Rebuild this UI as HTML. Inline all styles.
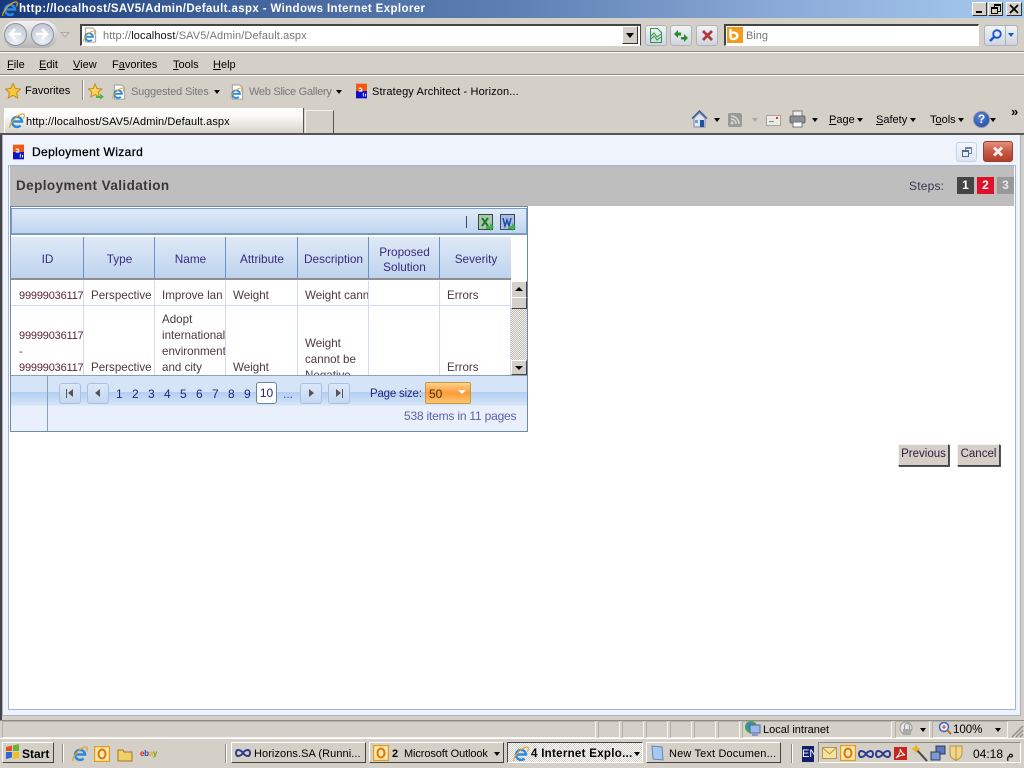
<!DOCTYPE html>
<html><head><meta charset="utf-8"><title>Deployment Wizard</title>
<style>
html,body{margin:0;padding:0}
body{width:1024px;height:768px;overflow:hidden;position:relative;background:#d4d0c8;font:11px "Liberation Sans",sans-serif;color:#000}
div,span,svg{position:absolute}
.t{white-space:nowrap;line-height:14px}
u{text-decoration:underline}
.g{color:#777}
.arr{width:0;height:0;border:3px solid transparent;border-top:4px solid #000;border-bottom:0}
.tb{width:20px;height:19px;border:1px solid #aeb2bb;border-radius:3px;background:linear-gradient(#f1f3f7,#cfd5e2)}
.hd{top:237px;height:41px;background:linear-gradient(#dfe9f6,#bed4ee);border-right:1px solid #6b92c4;box-sizing:border-box}
.ht{left:1px;right:0;text-align:center;color:#3a2a80;font-size:11.8px;line-height:15px}
.col{top:0;height:94px;overflow:hidden;border-right:1px solid #cfdbea;box-sizing:border-box}
.c{left:7px;white-space:nowrap;font-size:11.6px;line-height:16px;color:#4a3a40}
.pb{top:383px;width:20px;height:19px;border:1px solid #a9c0de;border-radius:3px;background:linear-gradient(#dce8f8,#c3d8f2)}
.pn{top:387px;font-size:12px;line-height:14px;color:#25257a}
.btn{top:444px;height:20px;background:#d4d0c8;border:1px solid;border-color:#f4f3ef #444 #444 #f4f3ef;box-shadow:1px 1px 0 #555;color:#302040;font-size:11.5px;line-height:19px;text-align:center}
.task{top:742px;height:21px;background:#d4d0c8;border:1px solid;border-color:#fff #444 #444 #fff;box-sizing:border-box}
.sb{top:721px;height:17px;border-left:1px solid #b4b0a8;border-right:1px solid #f4f3ef;border-top:1px solid #b4b0a8;border-bottom:1px solid #f4f3ef;box-sizing:border-box}
</style></head><body>
<svg width="0" height="0" style="left:0;top:0"><defs>
<symbol id="ie" viewBox="0 0 16 16"><path d="M3.500 8.500h9.500A5 5 0 1 0 11.500 12.500" fill="none" stroke="#2b8ae0" stroke-width="2.500"/><path d="M1 15C-.5 12 7 2.500 13 1c2.500-.5 3 1.500 1.500 4.500" fill="none" stroke="#e3a32c" stroke-width="1.200"/></symbol>
<symbol id="pg" viewBox="0 0 16 16"><path d="M2.500.5h8l3 3v12h-11z" fill="#fff" stroke="#9a9a9a"/><use href="#ie" x="0" y="3" width="13" height="13"/></symbol>
<symbol id="sa" viewBox="0 0 12 16"><rect width="12" height="8" fill="#f25a10"/><rect y="8" width="12" height="8" fill="#1010c8"/><path d="M3 5h3M6 5v3M3 8h4" stroke="#fff" stroke-width="1.300"/><path d="M8 10v4M10.500 11v3" stroke="#fff"/></symbol>
<symbol id="oi" viewBox="0 0 16 16"><rect x=".5" y=".5" width="15" height="15" fill="#fbe9b0" stroke="#e59a18" stroke-width="1.400"/><ellipse cx="8" cy="8" rx="3.500" ry="4.500" fill="none" stroke="#d9770b" stroke-width="2"/></symbol>
<symbol id="inf" viewBox="0 0 16 8"><path d="M8 4C6 1 4 1 3 1 1.500 1 1 3 1 4s.5 3 2 3c1 0 3 0 5-3 2-3 4-3 5-3 1.500 0 2 2 2 3s-.5 3-2 3c-1 0-3 0-5-3z" fill="none" stroke="#2d3c8e" stroke-width="2"/></symbol>
</defs></svg>

<!-- title bar -->
<div style="left:0;top:0;width:1024px;height:18px;background:linear-gradient(90deg,#17387a 0,#3e6099 20%,#5d7fb2 50%,#88a9d6 75%,#a6caf0 100%)"></div>
<svg style="left:2px;top:1px" width="16" height="16"><use href="#ie"/></svg>
<div class="t" style="left:19px;top:2px;color:#fff;font-weight:700;font-size:11.5px;letter-spacing:.37px">http://localhost/SAV5/Admin/Default.aspx - Windows Internet Explorer</div>
<div style="left:972px;top:2px;background:#d4d0c8;border:1px solid;border-color:#fff #333 #333 #fff;width:13px;height:12px"><span style="left:3px;top:8px;width:6px;height:2px;background:#000"></span></div>
<div style="left:988px;top:2px;width:13px;height:12px;background:#d4d0c8;border:1px solid;border-color:#fff #333 #333 #fff"><span style="left:5px;top:1px;width:5px;height:5px;border:1px solid #000;border-top-width:2px"></span><span style="left:2px;top:4px;width:5px;height:4px;border:1px solid #000;border-top-width:2px;background:#d4d0c8"></span></div>
<div style="left:1006px;top:2px;width:14px;height:12px;background:#d4d0c8;border:1px solid;border-color:#fff #333 #333 #fff"><svg style="left:2px;top:1px" width="10" height="10"><path d="M1 1l8 8M9 1L1 9" stroke="#000" stroke-width="1.800"/></svg></div>

<!-- nav -->
<div style="left:2px;top:21px;width:56px;height:27px;border-radius:14px;background:linear-gradient(#f3f3f3,#b5b5b5)"></div>
<div style="left:4px;top:23px;width:21px;height:21px;border-radius:50%;background:radial-gradient(circle at 50% 80%,#eef2f8,#b9c1ce);border:1px solid #8d929c"></div>
<div style="left:31px;top:23px;width:21px;height:21px;border-radius:50%;background:radial-gradient(circle at 50% 80%,#eef2f8,#b9c1ce);border:1px solid #8d929c"></div>
<svg style="left:7px;top:27px" width="16" height="14"><path d="M14 7H3M8 2L3 7l5 5" fill="none" stroke="#fff" stroke-width="2.600"/></svg>
<svg style="left:35px;top:27px" width="16" height="14"><path d="M1 7h11M7 2l5 5-5 5" fill="none" stroke="#fff" stroke-width="2.600"/></svg>
<svg style="left:60px;top:32px" width="10" height="6"><path d="M1 .5h8L5 5z" fill="#d8d6d0" stroke="#aaa"/></svg>

<div style="left:80px;top:24px;width:558px;height:19px;background:#fff;border-style:solid;border-width:2px 1px 1px 2px;border-color:#444 #444 #fff #444"></div>
<svg style="left:83px;top:27px" width="15" height="16"><use href="#pg"/></svg>
<div class="t" style="left:103px;top:29px;color:#777;font-size:11px;letter-spacing:.1px">http://<span style="position:static;color:#111">localhost</span>/SAV5/Admin/Default.aspx</div>
<div style="left:622px;top:26px;width:14px;height:16px;background:#d4d0c8;border:1px solid;border-color:#fff #333 #333 #fff"><span class="arr" style="left:3px;top:6px;border-width:5px 4px 0;border-top-color:#000"></span></div>

<div class="tb" style="left:645px;top:25px"><svg style="left:4px;top:2px" width="12" height="15"><path d="M.5.5h7l4 4v10H.5zM1 8l3-3 3 4 4-3M1 11l3-3 3 4 4-3" fill="none" stroke="#2f9a44"/></svg></div>
<div class="tb" style="left:670px;top:25px"><svg style="left:2px;top:3px" width="16" height="14"><path d="M1 5l4-4v2.500h3V6.500H5V9z" fill="#2b8a2b"/><path d="M15 8l-4 4v-2.500H8V7h3V4z" fill="#2b8a2b" transform="translate(0 1)"/></svg></div>
<div class="tb" style="left:696px;top:25px"><svg style="left:4px;top:3px" width="13" height="13"><path d="M2 2l9 9M11 2l-9 9" stroke="#b03a3a" stroke-width="2.800"/></svg></div>

<div style="left:724px;top:24px;width:252px;height:19px;background:#fff;border-style:solid;border-width:2px 1px 1px 2px;border-color:#444 #fff #fff #444"></div>
<div style="left:727px;top:27px;width:16px;height:16px;background:#f39c1c"><svg style="left:1px;top:1px" width="14" height="14"><path d="M2.500 1v9M2.500 10a4 3.200 0 1 0 1-5" fill="none" stroke="#fff" stroke-width="2.400"/></svg></div>
<div class="t g" style="left:746px;top:29px;font-size:11px">Bing</div>
<div class="tb" style="left:984px;top:25px;border-radius:3px 0 0 3px"><svg style="left:3px;top:2px" width="15" height="15"><circle cx="9" cy="6" r="3.800" fill="#dbe7fb" stroke="#1a55d0" stroke-width="1.800"/><path d="M6 9l-4 4" stroke="#1a55d0" stroke-width="2.400"/></svg></div>
<div class="tb" style="left:1005px;top:25px;width:11px;border-radius:0 3px 3px 0"><span class="arr" style="left:2px;top:7px;border-top-color:#1a55d0"></span></div>

<div style="left:0;top:51px;width:1024px;height:1px;background:#8e8b84"></div>
<div style="left:0;top:52px;width:1024px;height:1px;background:#fff"></div>

<!-- menu -->
<div class="t" style="left:7px;top:58px"><u>F</u>ile</div>
<div class="t" style="left:39px;top:58px"><u>E</u>dit</div>
<div class="t" style="left:73px;top:58px"><u>V</u>iew</div>
<div class="t" style="left:112px;top:58px">F<u>a</u>vorites</div>
<div class="t" style="left:173px;top:58px"><u>T</u>ools</div>
<div class="t" style="left:213px;top:58px"><u>H</u>elp</div>
<div style="left:0;top:74px;width:1024px;height:1px;background:#8e8b84"></div>
<div style="left:0;top:75px;width:1024px;height:1px;background:#fff"></div>

<!-- favorites -->
<svg style="left:5px;top:83px" width="16" height="16"><path d="M8 .5l2.300 5 5.200.6-3.900 3.500 1.100 5.400L8 12.300 3.300 15l1.100-5.400L.5 6.100l5.200-.6z" fill="#f7c93e" stroke="#c98a1c"/></svg>
<div class="t" style="left:25px;top:84px">Favorites</div>
<div style="left:82px;top:80px;width:1px;height:20px;background:#8e8b84"></div>
<div style="left:83px;top:80px;width:1px;height:20px;background:#fff"></div>
<svg style="left:88px;top:83px" width="17" height="17"><path d="M7 1l2 4.500 4.800.5-3.500 3.200 1 4.800L7 11.500 2.800 14l1-4.800L.5 6l4.700-.5z" fill="#f7d55c" stroke="#c98a1c"/><path d="M8 13h4v-2.500l4 3.500-4 2.500V15H8z" fill="#4fb848"/></svg>
<svg style="left:112px;top:84px" width="15" height="16"><use href="#pg"/></svg>
<div class="t g" style="left:131px;top:85px;letter-spacing:-.17px">Suggested Sites</div>
<span class="arr" style="left:214px;top:90px"></span>
<svg style="left:230px;top:84px" width="15" height="16"><use href="#pg"/></svg>
<div class="t g" style="left:249px;top:85px;letter-spacing:-.27px">Web Slice Gallery</div>
<span class="arr" style="left:336px;top:90px"></span>
<svg style="left:356px;top:83px" width="11" height="16"><use href="#sa"/></svg>
<div class="t" style="left:372px;top:85px;letter-spacing:.12px">Strategy Architect - Horizon...</div>

<!-- tabs -->
<div style="left:4px;top:108px;width:298px;height:25px;background:linear-gradient(#fbfbfa,#fbfbfa 30%,#d6d3cc);border-right:1px solid #555;border-left:1px solid #fff"></div>
<svg style="left:9px;top:113px" width="16" height="16"><use href="#ie"/></svg>
<div class="t" style="left:26px;top:115px;letter-spacing:.1px">http://localhost/SAV5/Admin/Default.aspx</div>
<div style="left:305px;top:110px;width:27px;height:23px;border:1px solid #f2f1ec;border-bottom:0;border-right:1px solid #555"></div>

<svg style="left:691px;top:110px" width="17" height="18"><path d="M1 8.500L8.500 1 16 8.500" fill="none" stroke="#3c5aa8" stroke-width="1.500"/><path d="M3 8v9h11V8L8.500 3z" fill="#dfe6f3" stroke="#7f8aa0"/><rect x="9" y="10" width="4" height="7" fill="#2450a8"/><rect x="4" y="10" width="3" height="3" fill="#6fa0e0"/></svg>
<span class="arr" style="left:714px;top:118px"></span>
<div style="left:728px;top:113px;width:14px;height:14px;background:#9a9a96;border-radius:2px"><svg style="left:2px;top:2px" width="10" height="10"><circle cx="2" cy="8" r="1.500" fill="#d8d8d4"/><path d="M1 4a5 5 0 0 1 5 5M1 1a8 8 0 0 1 8 8" fill="none" stroke="#d8d8d4" stroke-width="1.500"/></svg></div>
<span class="arr" style="left:752px;top:118px;border-top-color:#aaa"></span>
<div style="left:766px;top:115px;width:13px;height:9px;background:#eceae6;border:1px solid #a8a59f"><span style="left:2px;top:5px;width:5px;height:1px;background:#888"></span><span style="left:9px;top:1px;width:2px;height:2px;background:#d33"></span></div>
<svg style="left:789px;top:110px" width="17" height="18"><rect x="4" y="1" width="9" height="6" fill="#eee" stroke="#777"/><rect x="1" y="6" width="15" height="7" rx="1.500" fill="#8b8f96" stroke="#666"/><rect x="4" y="12" width="9" height="5" fill="#fff" stroke="#777"/></svg>
<span class="arr" style="left:812px;top:118px"></span>
<div class="t" style="left:829px;top:113px"><u>P</u>age</div><span class="arr" style="left:857px;top:118px"></span>
<div class="t" style="left:876px;top:113px"><u>S</u>afety</div><span class="arr" style="left:910px;top:118px"></span>
<div class="t" style="left:930px;top:113px">T<u>o</u>ols</div><span class="arr" style="left:958px;top:118px"></span>
<div style="left:973px;top:111px;width:15px;height:15px;border-radius:50%;background:radial-gradient(circle at 40% 35%,#5d86d8,#1c3e9a);border:1px solid #8f97ad;color:#fff;font:700 12px/15px 'Liberation Sans',sans-serif;text-align:center">?</div>
<span class="arr" style="left:990px;top:118px"></span>
<div class="t" style="left:1011px;top:105px;font-size:13px;font-weight:700">»</div>

<div style="left:0;top:133px;width:1024px;height:2px;background:#555"></div>

<!-- page frame -->
<div style="left:0;top:135px;width:1024px;height:585px;background:#d4d0c8"></div>
<div style="left:0;top:135px;width:2px;height:585px;background:#444"></div>
<div style="left:2px;top:135px;width:1019px;height:581px;background:#eff3fc;border:1px solid #a8b3cc;border-top:0;box-sizing:border-box"></div>
<svg style="left:13px;top:144px" width="11" height="16"><use href="#sa"/></svg>
<div class="t" style="left:32px;top:145px;font-size:12px;-webkit-text-stroke:.3px #000;letter-spacing:.38px">Deployment Wizard</div>
<div style="left:956px;top:142px;width:19px;height:18px;border:1px solid #c5d3e4;border-radius:3px;background:linear-gradient(#f3f7fc,#dce6f3)"><span style="left:8px;top:4px;width:5px;height:4px;border:2px solid #6b85a8;border-width:2px 1px 1px"></span><span style="left:5px;top:7px;width:5px;height:4px;border:2px solid #50698c;border-width:2px 1px 1px;background:#e6eef8"></span></div>
<div style="left:983px;top:141px;width:28px;height:19px;border:1px solid #9a4030;border-radius:3px;background:linear-gradient(#e5907c,#c65a45 50%,#b03e2a)"><svg style="left:8px;top:4px" width="12" height="11"><path d="M2 1.500l8 8M10 1.500l-8 8" stroke="#f4ecea" stroke-width="3"/></svg></div>

<div style="left:8px;top:165px;width:1008px;height:545px;background:#fff;border:1px solid #a8b3cc;box-sizing:border-box"></div>
<div style="left:10px;top:166px;width:1004px;height:40px;background:#bebebe"></div>
<div class="t" style="left:16px;top:179px;font-size:13.5px;font-weight:700;color:#3d3538;letter-spacing:.42px">Deployment Validation</div>
<div class="t" style="left:909px;top:179px;font-size:12px;color:#3c3550;letter-spacing:.2px">Steps:</div>
<div style="left:957px;top:177px;width:17px;height:17px;background:#454545;color:#fff;font:700 12px/17px 'Liberation Sans',sans-serif;text-align:center">1</div>
<div style="left:977px;top:177px;width:17px;height:17px;background:#e0102a;color:#fff;font:700 12px/17px 'Liberation Sans',sans-serif;text-align:center">2</div>
<div style="left:997px;top:177px;width:17px;height:17px;background:#999;color:#e8e8e8;font:700 12px/17px 'Liberation Sans',sans-serif;text-align:center">3</div>

<!-- grid -->
<div style="left:10px;top:206px;width:518px;height:226px;background:#fff;border:1px solid #6d8cad;box-sizing:border-box"></div>
<div style="left:11px;top:208px;width:516px;height:27px;background:linear-gradient(#e1ebf8,#bfd5ef);border:1px solid #7c9cc4;border-bottom:2px solid #7d9bc0;box-sizing:border-box"></div>
<div style="left:466px;top:216px;width:1px;height:12px;background:#4a4070"></div>
<div style="left:478px;top:214px;width:13px;height:14px;background:#a8c8a8;border:1px solid #3a4a40"><svg style="left:0;top:0" width="16" height="16"><path d="M3 3l6 8M9 3l-6 8" stroke="#1c7a30" stroke-width="2"/><path d="M7 11h4V8l4 4-4 4v-2H7z" fill="#3fb04a"/></svg></div>
<div style="left:500px;top:214px;width:13px;height:14px;background:#a9bde0;border:1px solid #3a4a60"><svg style="left:0;top:0" width="16" height="16"><path d="M2 3l2 8 2-6 2 6 2-8" fill="none" stroke="#2248a8" stroke-width="1.500"/><path d="M7 11h4V8l4 4-4 4v-2H7z" fill="#3fb04a"/></svg></div>

<div class="hd" style="left:11px;width:73px"><div class="ht" style="top:15px">ID</div></div>
<div class="hd" style="left:84px;width:71px"><div class="ht" style="top:15px">Type</div></div>
<div class="hd" style="left:155px;width:71px"><div class="ht" style="top:15px">Name</div></div>
<div class="hd" style="left:226px;width:72px"><div class="ht" style="top:15px">Attribute</div></div>
<div class="hd" style="left:298px;width:71px"><div class="ht" style="top:15px">Description</div></div>
<div class="hd" style="left:369px;width:71px"><div class="ht" style="top:8px">Proposed<br>Solution</div></div>
<div class="hd" style="left:440px;width:71px;border-right:0"><div class="ht" style="top:15px">Severity</div></div>
<div style="left:11px;top:278px;width:500px;height:2px;background:#8f8f8f"></div>

<div style="left:11px;top:281px;width:500px;height:94px;overflow:hidden;background:#fff">
 <div style="left:0;top:24px;width:500px;height:1px;background:#cfdbea"></div>
 <div class="col" style="left:0;width:73px">
  <div class="c" style="left:8px;top:7px;color:#5a1f30;font-size:11px;letter-spacing:-.18px">99999036117</div>
  <div class="c" style="left:8px;top:47px;color:#5a1f30;font-size:11px;letter-spacing:-.18px">99999036117<br>-<br>99999036117</div></div>
 <div class="col" style="left:73px;width:71px">
  <div class="c" style="top:7px">Perspective</div><div class="c" style="top:79px">Perspective</div></div>
 <div class="col" style="left:144px;width:71px">
  <div class="c" style="top:7px">Improve lan</div><div class="c" style="top:31px">Adopt<br>international<br>environment<br>and city</div></div>
 <div class="col" style="left:215px;width:72px">
  <div class="c" style="top:7px">Weight</div><div class="c" style="top:79px">Weight</div></div>
 <div class="col" style="left:287px;width:71px">
  <div class="c" style="top:7px">Weight cannot</div><div class="c" style="top:55px">Weight<br>cannot be<br>Negative</div></div>
 <div class="col" style="left:358px;width:71px"></div>
 <div class="col" style="left:429px;width:71px;border-right:0">
  <div class="c" style="top:7px">Errors</div><div class="c" style="top:79px">Errors</div></div>
</div>
<div style="left:510px;top:281px;width:1px;height:94px;background:#cfdbea"></div>

<!-- scrollbar -->
<div style="left:511px;top:281px;width:16px;height:94px;background-color:#e8e6e2;background-image:repeating-conic-gradient(#bdbab3 0 25%,#f4f3f0 0 50%);background-size:2px 2px"></div>
<div style="left:511px;top:281px;width:14px;height:15px;background:#d4d0c8;border:1px solid;border-color:#fff #444 #444 #fff"><span style="left:3px;top:5px;width:0;height:0;border:4px solid transparent;border-bottom:4px solid #000;border-top:0"></span></div>
<div style="left:511px;top:297px;width:14px;height:10px;background:#d4d0c8;border:1px solid;border-color:#fff #444 #444 #fff"></div>
<div style="left:511px;top:360px;width:14px;height:13px;background:#d4d0c8;border:1px solid;border-color:#fff #444 #444 #fff"><span style="left:3px;top:5px;width:0;height:0;border:4px solid transparent;border-top:4px solid #000;border-bottom:0"></span></div>

<!-- pager -->
<div style="left:11px;top:375px;width:516px;height:1px;background:#8aa0bd"></div>
<div style="left:11px;top:376px;width:516px;height:55px;background:linear-gradient(#d5e4f7 0,#d5e4f7 16px,#b1cdf0 16px,#d6e5f8 29px,#e9f0fb 30px,#e9f0fb 100%)"></div>
<div style="left:47px;top:376px;width:1px;height:55px;background:#8aa0bd"></div>
<div class="pb" style="left:59px"><span style="left:6px;top:5px;width:1px;height:9px;background:#555"></span><span style="left:8px;top:5px;border:4.500px solid transparent;border-right:5px solid #555;border-left:0"></span></div>
<div class="pb" style="left:87px"><span style="left:7px;top:5px;border:4.500px solid transparent;border-right:5px solid #555;border-left:0"></span></div>
<div class="pn" style="left:116px">1</div><div class="pn" style="left:132px">2</div><div class="pn" style="left:148px">3</div><div class="pn" style="left:164px">4</div><div class="pn" style="left:180px">5</div><div class="pn" style="left:196px">6</div><div class="pn" style="left:212px">7</div><div class="pn" style="left:228px">8</div><div class="pn" style="left:244px">9</div>
<div style="left:256px;top:382px;width:19px;height:20px;background:#fff;border:1px solid #6a84a8;border-radius:3px;text-align:center;font-size:12px;line-height:21px;color:#25257a">10</div>
<div class="pn" style="left:283px;color:#4a4a90">...</div>
<div class="pb" style="left:300px"><span style="left:8px;top:5px;border:4.500px solid transparent;border-left:5px solid #555;border-right:0"></span></div>
<div class="pb" style="left:328px"><span style="left:7px;top:5px;border:4.500px solid transparent;border-left:5px solid #555;border-right:0"></span><span style="left:13px;top:5px;width:1px;height:9px;background:#555"></span></div>
<div class="t" style="left:370px;top:387px;font-size:11.5px;color:#25257a;letter-spacing:-.2px">Page size:</div>
<div style="left:425px;top:382px;width:44px;height:20px;border:1px solid #c29a45;border-radius:2px;background:linear-gradient(#fcd38a,#fb9b3a 50%,#fdc670)"><span class="t" style="left:3px;top:4px;font-size:12px;color:#4a3000">50</span><span style="left:32px;top:7px;border:4px solid transparent;border-top:4px solid #fff;border-bottom:0"></span></div>
<div class="t" style="left:404px;top:409px;font-size:12px;color:#5e5ea8;letter-spacing:-.2px">538 items in 11 pages</div>

<!-- buttons -->
<div class="btn" style="left:898px;width:49px">Previous</div>
<div class="btn" style="left:957px;width:41px">Cancel</div>

<!-- status bar -->
<div style="left:0;top:720px;width:1024px;height:1px;background:#8e8b84"></div>
<div class="sb" style="left:2px;width:594px"></div>
<div class="sb" style="left:598px;width:22px"></div><div class="sb" style="left:622px;width:22px"></div><div class="sb" style="left:646px;width:22px"></div><div class="sb" style="left:670px;width:22px"></div><div class="sb" style="left:694px;width:22px"></div><div class="sb" style="left:718px;width:22px"></div>
<div class="sb" style="left:742px;width:150px"></div>
<svg style="left:744px;top:720px" width="17" height="17"><circle cx="7" cy="7" r="6" fill="#3fa74a"/><path d="M3 3h6v5H3z" fill="#3f80d8"/><rect x="6" y="5" width="10" height="8" fill="#9db8e4" stroke="#4a6aa8"/><rect x="8" y="13" width="6" height="3" fill="#8a9ac0"/></svg>
<div class="t" style="left:763px;top:723px">Local intranet</div>
<div class="sb" style="left:895px;width:35px"></div>
<svg style="left:898px;top:721px" width="17" height="16"><circle cx="8" cy="7" r="6" fill="#e3e3e0" stroke="#999"/><rect x="5" y="8" width="8" height="6" fill="#aaa"/><path d="M6.500 8V5a2.500 2.500 0 0 1 5 0v3" fill="none" stroke="#999"/></svg>
<span class="arr" style="left:920px;top:728px"></span>
<div class="sb" style="left:932px;width:76px"></div>
<svg style="left:938px;top:721px" width="14" height="15"><circle cx="6" cy="6" r="4.500" fill="#e8f0fc" stroke="#3565c8" stroke-width="1.500"/><path d="M4 6h4M6 4v4" stroke="#d33"/><path d="M9 9l4 4" stroke="#a87830" stroke-width="2"/></svg>
<div class="t" style="left:953px;top:723px;font-size:11.5px">100%</div>
<span class="arr" style="left:995px;top:728px"></span>
<svg style="left:1011px;top:725px" width="13" height="13"><path d="M12 1L1 12M12 5L5 12M12 9l-3 3" stroke="#8e8b84" stroke-width="1.300"/></svg>

<!-- taskbar -->
<div style="left:0;top:738px;width:1024px;height:1px;background:#fff"></div>
<div class="task" style="left:2px;width:52px"></div>
<svg style="left:5px;top:744px" width="15" height="15"><path d="M1 3l6-1.500V7H1z" fill="#e2531f"/><path d="M8 1.500L14 0v7H8z" fill="#6ab52d"/><path d="M1 8h6v5.500L1 15z" fill="#2f66d4"/><path d="M8 8h6v6l-6 1z" fill="#f3bf1a"/></svg>
<div class="t" style="left:22px;top:747px;font-weight:700;font-size:12px">Start</div>
<div style="left:62px;top:744px;width:1px;height:19px;background:#8e8b84"></div><div style="left:63px;top:744px;width:1px;height:19px;background:#fff"></div>
<svg style="left:72px;top:746px" width="16" height="16"><use href="#ie"/></svg>
<svg style="left:94px;top:746px" width="16" height="16"><use href="#oi"/></svg>
<svg style="left:117px;top:747px" width="16" height="15"><path d="M1 3h5l1 2h8v9H1z" fill="#f1cf67" stroke="#a47a20"/></svg>
<div class="t" style="left:140px;top:747px;font-size:8px;font-weight:700;letter-spacing:-.3px"><span style="position:static;color:#e02020">e</span><span style="position:static;color:#2040c0">b</span><span style="position:static;color:#e8b000">a</span><span style="position:static;color:#70a020">y</span></div>
<div style="left:225px;top:744px;width:1px;height:19px;background:#8e8b84"></div><div style="left:226px;top:744px;width:1px;height:19px;background:#fff"></div>
<div class="task" style="left:231px;width:135px"></div>
<svg style="left:235px;top:749px" width="16" height="8"><use href="#inf"/></svg>
<div class="t" style="left:254px;top:747px;letter-spacing:.07px">Horizons.SA (Runni...</div>
<div class="task" style="left:369px;width:135px"></div>
<svg style="left:373px;top:745px" width="16" height="16"><use href="#oi"/></svg>
<div class="t" style="left:392px;top:747px;letter-spacing:-.1px"><b>2</b>&nbsp; Microsoft Outlook</div>
<span class="arr" style="left:494px;top:752px"></span>
<div style="left:507px;top:742px;width:136px;height:21px;background-color:#eceae6;background-image:repeating-conic-gradient(#d4d0c8 0 25%,#fff 0 50%);background-size:2px 2px;border:1px solid;border-color:#444 #fff #fff #444;box-sizing:border-box"></div>
<svg style="left:513px;top:746px" width="16" height="16"><use href="#ie"/></svg>
<div class="t" style="left:531px;top:747px;font-weight:700;letter-spacing:.3px;font-size:11.5px">4 Internet Explo...</div>
<span class="arr" style="left:634px;top:752px"></span>
<div class="task" style="left:646px;width:135px"></div>
<svg style="left:649px;top:745px" width="16" height="16"><path d="M3 1l10 1 1 13-10-1z" fill="#a7c8ee" stroke="#6286b8"/></svg>
<div class="t" style="left:669px;top:747px;letter-spacing:.15px">New Text Documen...</div>
<div style="left:791px;top:744px;width:1px;height:19px;background:#8e8b84"></div><div style="left:792px;top:744px;width:1px;height:19px;background:#fff"></div>
<div style="left:802px;top:746px;width:12px;height:16px;background:#10206a;color:#fff;font-size:11px;line-height:16px;overflow:hidden">EN</div>
<div style="left:818px;top:742px;width:203px;height:21px;border:1px solid;border-color:#8e8b84 #fff #fff #8e8b84;box-sizing:border-box"></div>
<svg style="left:822px;top:747px" width="15" height="12"><rect x=".5" y=".5" width="14" height="11" fill="#f7e3a0" stroke="#b89440"/><path d="M1 1l6.500 6L14 1" fill="none" stroke="#b89440"/></svg>
<svg style="left:840px;top:745px" width="16" height="16"><use href="#oi"/></svg>
<svg style="left:858px;top:750px" width="16" height="8"><use href="#inf"/></svg>
<svg style="left:875px;top:750px" width="16" height="8"><use href="#inf"/></svg>
<div style="left:894px;top:747px;width:13px;height:13px;background:#c8241c"><svg style="left:1px;top:1px" width="11" height="11"><path d="M1 10C4 7 6 3 5 1c2 4 3 5 5 6-3-.5-6 1-9 3z" fill="none" stroke="#fff"/></svg></div>
<svg style="left:911px;top:744px" width="17" height="18"><path d="M5 5l11 12" stroke="#444" stroke-width="2"/><path d="M5 0l1.500 3.500L10 5 6.500 6.500 5 10 3.500 6.500 0 5l3.500-1.500z" fill="#f0b020"/></svg>
<svg style="left:930px;top:745px" width="16" height="17"><rect x="6" y="1" width="9" height="8" fill="#5e78b8" stroke="#2c3a68"/><rect x="1" y="7" width="9" height="8" fill="#8098d0" stroke="#2c3a68"/></svg>
<svg style="left:949px;top:745px" width="14" height="16"><path d="M1 1h12v8c0 3-3 5-6 6.500C4 14 1 12 1 9z" fill="#f0d58a" stroke="#b89440"/><path d="M7 1v14" stroke="#b89440"/></svg>
<div class="t" style="left:973px;top:747px;font-size:12px">04:18 م</div>
</body></html>
